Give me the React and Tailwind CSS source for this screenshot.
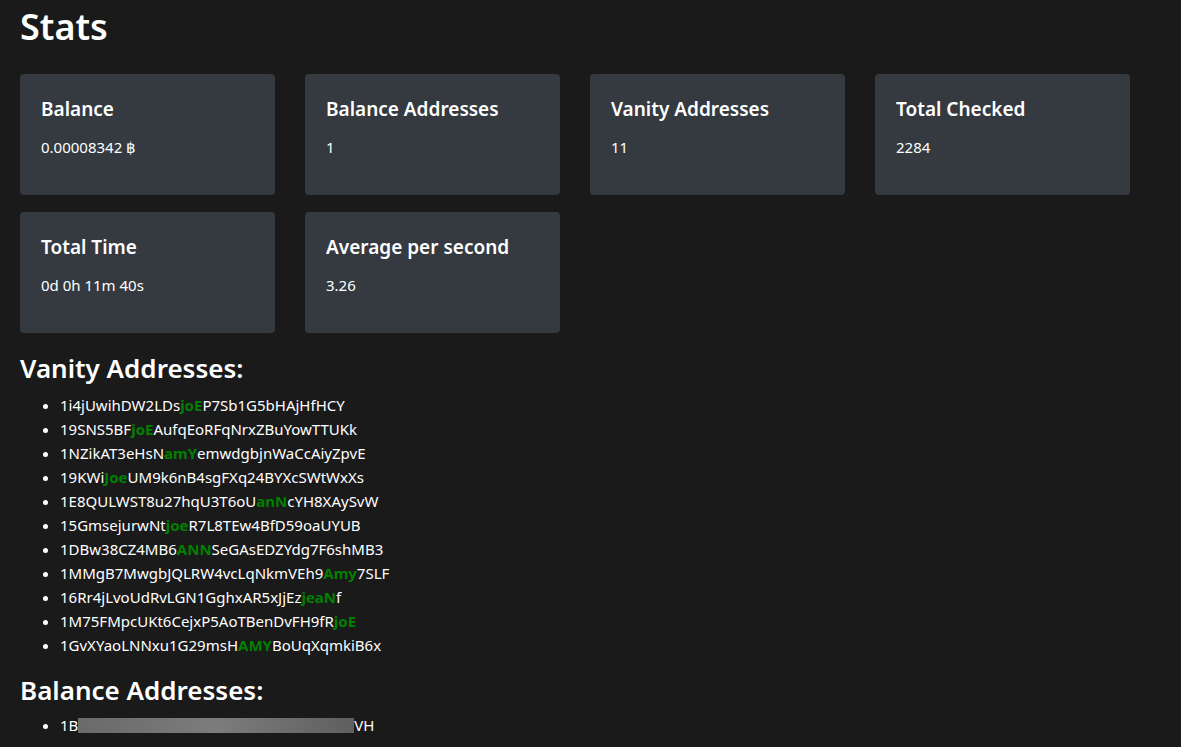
import React from 'react';

const stats = [
  { title: 'Balance', value: '0.00008342 ฿' },
  { title: 'Balance Addresses', value: '1' },
  { title: 'Vanity Addresses', value: '11' },
  { title: 'Total Checked', value: '2284' },
  { title: 'Total Time', value: '0d 0h 11m 40s' },
  { title: 'Average per second', value: '3.26' },
];

// [before, highlight, after]
const vanity = [
  ['1i4jUwihDW2LDs', 'joE', 'P7Sb1G5bHAjHfHCY'],
  ['19SNS5BF', 'joE', 'AufqEoRFqNrxZBuYowTTUKk'],
  ['1NZikAT3eHsN', 'amY', 'emwdgbjnWaCcAiyZpvE'],
  ['19KWi', 'Joe', 'UM9k6nB4sgFXq24BYXcSWtWxXs'],
  ['1E8QULWST8u27hqU3T6oU', 'anN', 'cYH8XAySvW'],
  ['15GmsejurwNt', 'joe', 'R7L8TEw4BfD59oaUYUB'],
  ['1DBw38CZ4MB6', 'ANN', 'SeGAsEDZYdg7F6shMB3'],
  ['1MMgB7MwgbJQLRW4vcLqNkmVEh9', 'Amy', '7SLF'],
  ['16Rr4jLvoUdRvLGN1GghxAR5xJjEz', 'jeaN', 'f'],
  ['1M75FMpcUKt6CejxP5AoTBenDvFH9fR', 'joE', ''],
  ['1GvXYaoLNNxu1G29msH', 'AMY', 'BoUqXqmkiB6x'],
];

function StatCard({ title, value }) {
  return (
    <div className="h-[121px] rounded-[4px] bg-[#343a40] px-[21px] pt-[23px]">
      <h5 className="text-[19px] leading-[24px] font-semibold">{title}</h5>
      <p className="mt-[14px] text-[15px] leading-[24px]">{value}</p>
    </div>
  );
}

export default function App() {
  return (
    <div
      className="min-h-screen bg-[#1a1a1a] px-5 text-white"
      style={{ fontFamily: '"Noto Sans", "Open Sans", sans-serif' }}
    >
      <h1 className="pt-[3px] text-[36px] leading-[48px] font-semibold">Stats</h1>
      <div className="mt-[23px] grid grid-cols-[repeat(4,255px)] gap-x-[30px] gap-y-[17px]">
        {stats.map((s) => (
          <StatCard key={s.title} {...s} />
        ))}
      </div>

      <h3 className="mt-[18px] text-[26px] leading-[34px] font-semibold">Vanity Addresses:</h3>
      <ul className="mt-[8px] list-disc pl-10 text-[15px] leading-[24px]">
        {vanity.map(([a, b, c]) => (
          <li key={a + b}>
            {a}
            <span className="font-bold text-[#008000]">{b}</span>
            {c}
          </li>
        ))}
      </ul>

      <h3 className="mt-[16px] text-[26px] leading-[34px] font-semibold">Balance Addresses:</h3>
      <ul className="mt-[6px] list-disc pl-10 text-[15px] leading-[24px]">
        <li>
          1B
          <span className="inline-block h-[15px] w-[276px] align-[-2px] bg-linear-to-r from-[#6a6a6a] via-[#7c7c7c] to-[#5f5f5f]" />
          VH
        </li>
      </ul>
    </div>
  );
}
